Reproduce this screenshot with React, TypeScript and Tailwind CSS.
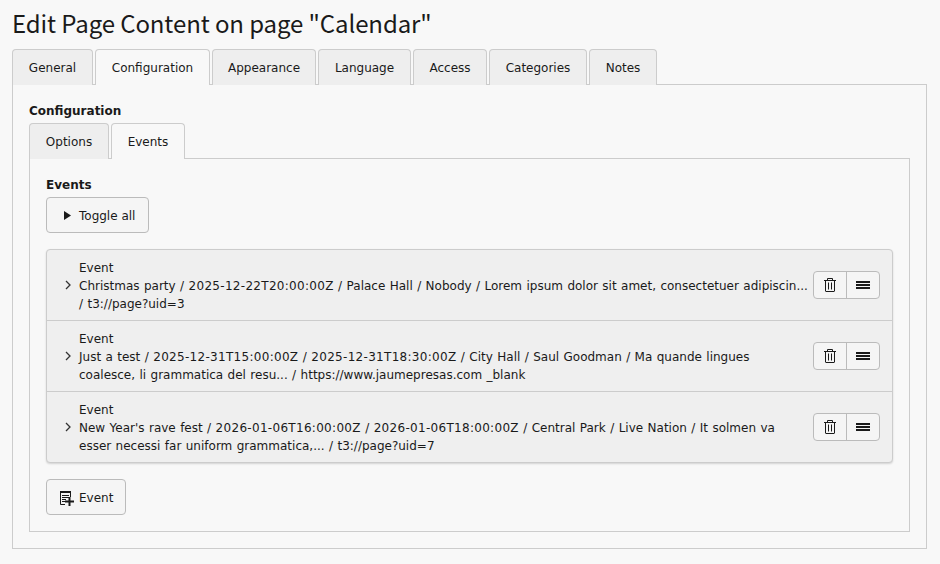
import React from 'react';

const mainTabs = [
  { label: 'General', width: 'w-[81px]' },
  { label: 'Configuration', width: 'w-[115px]', active: true },
  { label: 'Appearance', width: 'w-[104px]' },
  { label: 'Language', width: 'w-[93px]' },
  { label: 'Access', width: 'w-[74px]' },
  { label: 'Categories', width: 'w-[98px]' },
  { label: 'Notes', width: 'w-[68px]' },
];

const events = [
  [
    'Christmas party / 2025-12-22T20:00:00Z / Palace Hall / Nobody / Lorem ipsum dolor sit amet, consectetuer adipiscin...',
    '/ t3://page?uid=3',
  ],
  [
    'Just a test / 2025-12-31T15:00:00Z / 2025-12-31T18:30:00Z / City Hall / Saul Goodman / Ma quande lingues',
    'coalesce, li grammatica del resu... / https://www.jaumepresas.com _blank',
  ],
  [
    "New Year's rave fest / 2026-01-06T16:00:00Z / 2026-01-06T18:00:00Z / Central Park / Live Nation / It solmen va",
    'esser necessi far uniform grammatica,... / t3://page?uid=7',
  ],
];

const Tab: React.FC<{ label: string; width: string; active?: boolean }> = ({ label, width, active }) => (
  <div
    className={
      active
        ? `relative z-10 -mb-px h-[36px] ${width} flex items-center justify-center bg-[#f8f8f8] border border-b-0 border-[#cccccc] rounded-t-[4px]`
        : `-mb-px h-[36px] ${width} flex items-center justify-center bg-[#eeeeee] border border-b-0 border-[#cccccc] rounded-t-[4px]`
    }
  >
    {label}
  </div>
);

const TrashIcon = () => (
  <svg width="16" height="16" viewBox="0 0 16 16" fill="none" stroke="#1a1a1a" strokeWidth="1">
    <path d="M2 3.5h12M5.5 3.5V1.5h5v2M3.5 3.5v10.5c0 .3.2.5.5.5h8c.3 0 .5-.2.5-.5V3.5M6.5 5.5v7M9.5 5.5v7" />
  </svg>
);

const DragIcon = () => (
  <svg width="16" height="16" viewBox="0 0 16 16" fill="#1a1a1a">
    <rect x="1" y="4" width="14" height="2" />
    <rect x="1" y="7" width="14" height="2" />
    <rect x="1" y="10" width="14" height="2" />
  </svg>
);

const AddContentIcon = () => (
  <svg width="16" height="16" viewBox="0 0 16 16" fill="none">
    <path d="M6 14.5H1.5v-13h10V7" stroke="#1a1a1a" strokeWidth="1" />
    <rect x="1" y="1" width="11" height="2" fill="#1a1a1a" />
    <path d="M3 5.5h7M3 7.5h7M3 9.5h4M3 11.5h3" stroke="#1a1a1a" strokeWidth="1" />
    <path d="M6 11.5h9M10.5 7v9" stroke="#1a1a1a" strokeWidth="2" />
  </svg>
);

// dates come out a bit wider than the words around them
const EventLine: React.FC<{ text: string }> = ({ text }) => (
  <div className="whitespace-nowrap [word-spacing:0.6px]">
    {text.split(/(\d{4}-\d{2}-\d{2}T\d{2}:\d{2}:\d{2}Z)/).map((part, i) =>
      i % 2 === 1 ? (
        <span key={i} className="tracking-[0.3px]">
          {part}
        </span>
      ) : (
        <span key={i}>{part}</span>
      ),
    )}
  </div>
);

const EventRow: React.FC<{ lines: string[]; last?: boolean }> = ({ lines, last }) => (
  <div className={last ? 'flex items-center h-[70px] pl-[13px] pr-[12px]' : 'flex items-center h-[71px] pl-[13px] pr-[12px] border-b border-[#cccccc]'}>
    <svg width="16" height="16" viewBox="0 0 16 16" fill="none" stroke="#333333" strokeWidth="1.3" className="shrink-0">
      <path d="M6 4l4 4-4 4" />
    </svg>
    <div className="ml-[3px] mt-[2px] w-[730px] shrink-0 leading-[18px]">
      <div>Event</div>
      {lines.map((l) => (
        <EventLine key={l} text={l} />
      ))}
    </div>
    <div className="flex h-[28px] ml-auto border border-[#bbbbbb] rounded-[4px] bg-[#f5f5f5]">
      <div className="w-[33px] flex items-center justify-center border-r border-[#bbbbbb]">
        <TrashIcon />
      </div>
      <div className="w-[32px] flex items-center justify-center">
        <DragIcon />
      </div>
    </div>
  </div>
);

export default function App() {
  return (
    <div className="min-h-[564px] bg-[#f8f8f8] pl-[12px] text-[12px] leading-[18px] text-[#1a1a1a] font-['DejaVu_Sans',sans-serif] overflow-hidden">
      <h1 className="h-[49px] pt-[5px] text-[24px] leading-[36px] tracking-[-0.1px] font-['Noto_Sans_CJK_SC',sans-serif]">Edit Page Content on page "Calendar"</h1>

      <div className="flex gap-[2px]">
        {mainTabs.map((t) => (
          <Tab key={t.label} label={t.label} width={t.width} active={t.active} />
        ))}
      </div>

      <div className="w-[915px] border border-[#cccccc] p-[16px] h-[465px]">
        <div className="font-bold mt-[1px]">Configuration</div>
        <div className="flex gap-[2px] mt-[3px]">
          <Tab label="Options" width="w-[80px]" />
          <Tab label="Events" width="w-[74px]" active />
        </div>
        <div className="border border-[#cccccc] p-[16px] h-[374px]">
          <div className="font-bold mt-[1px]">Events</div>
          <button className="mt-[3px] h-[36px] pt-[1px] pl-[16px] pr-[13px] flex items-center border border-[#bbbbbb] rounded-[4px] bg-[#f5f5f5]">
            <svg width="16" height="16" viewBox="0 0 16 16" fill="#1a1a1a" className="shrink-0">
              <path d="M1 3l7 4.5-7 4.5z" />
            </svg>
            Toggle all
          </button>
          <div className="mt-[16px] border border-[#cccccc] rounded-[4px] bg-[#efefef] shadow-[0_1px_2px_rgba(0,0,0,0.15)]">
            {events.map((lines, i) => (
              <EventRow key={lines[0]} lines={lines} last={i === events.length - 1} />
            ))}
          </div>
          <button className="mt-[16px] h-[36px] pt-[1px] pl-[12px] pr-[12px] flex items-center gap-[4px] border border-[#bbbbbb] rounded-[4px] bg-[#f5f5f5]">
            <AddContentIcon />
            Event
          </button>
        </div>
      </div>
    </div>
  );
}
